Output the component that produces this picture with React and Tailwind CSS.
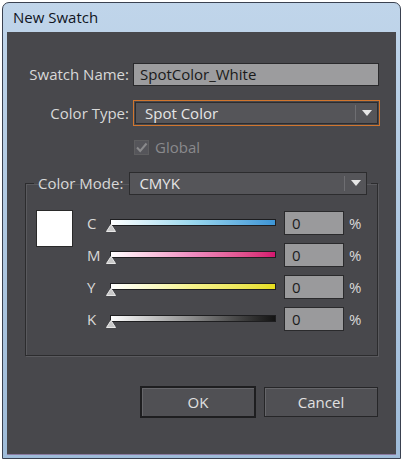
import React from 'react'

const font = { fontFamily: '"Open Sans", "Noto Sans", Arial, sans-serif' }

function Arrow() {
  return (
    <svg width="10" height="7" viewBox="0 0 10 7">
      <path d="M0 0 L10 0 L5 6 Z" fill="#e6e6e6" />
    </svg>
  )
}

function Thumb() {
  return (
    <svg width="10" height="8" viewBox="0 0 10 8">
      <path d="M5 0.5 L9.5 7.5 L0.5 7.5 Z" fill="#c8c8c8" stroke="#e8e8e8" strokeWidth="1" />
    </svg>
  )
}

const sliders = [
  { k: 'C', track: 'bg-gradient-to-r from-white via-[#9ad8ee] to-[#3d95d6]' },
  { k: 'M', track: 'bg-gradient-to-r from-white via-[#ee8cc0] to-[#d4146f]' },
  { k: 'Y', track: 'bg-gradient-to-r from-white via-[#f6f28a] to-[#e6de1a]' },
  { k: 'K', track: 'bg-gradient-to-r from-white via-[#8a8a8a] to-[#141414]' },
]

export default function App() {
  return (
    <div className="w-[404px] h-[461px] bg-white pt-[2px] pl-[2px] pr-[3px] pb-[2px]" style={font}>
      <div className="h-full flex flex-col rounded-t-[7px] border border-[#3a4150] bg-gradient-to-b from-[#c0d5ea] to-[#9fbcd9] px-[4px] pb-[3px]">
        <div className="h-[29px] flex items-center pl-[6px] text-[15px] text-[#10141e]">New Swatch</div>
        <div className="flex-1 bg-[#48484c] border-b border-[#8a7aa0] text-[15px] text-[#d8d8d8]">
          <div className="flex items-center mt-[31px]">
            <div className="w-[122px] text-right">Swatch Name:</div>
            <div className="ml-[4px] w-[246px] h-[23px] bg-[#9c9c9e] border border-[#2a2a2c] flex items-center pl-[6px] text-[#1a1a1a]">
              SpotColor_White
            </div>
          </div>

          <div className="flex items-center mt-[14px]">
            <div className="w-[122px] text-right">Color Type:</div>
            <div className="ml-[4px] w-[247px] h-[26px] border border-[#d2762e] p-[1px]">
              <div className="h-full bg-[#555559] border border-[#2c2c2e] flex items-center">
                <div className="flex-1 pl-[9px] text-[#e6e6e6]">Spot Color</div>
                <div className="w-[1px] h-[16px] bg-[#6e6e72]" />
                <div className="w-[21px] flex justify-center"><Arrow /></div>
              </div>
            </div>
          </div>

          <div className="flex items-center mt-[13px] ml-[127px] h-[17px] text-[#8a8a8c]">
            <div className="w-[15px] h-[15px] border border-[#5e5e60] bg-[#55555a] flex items-center justify-center">
              <svg width="13" height="13" viewBox="0 0 13 13">
                <path d="M2 6.5 L5.2 10 L11.5 2.5" fill="none" stroke="#8a8a8c" strokeWidth="2" />
              </svg>
            </div>
            <div className="ml-[6px]">Global</div>
          </div>

          <fieldset className="mt-[16px] ml-[18px] w-[353px] h-[184px] border border-[#2c2c2e] shadow-[1px_1px_0_#5a5a5e,inset_1px_1px_0_#5a5a5e]">
            <legend className="ml-[8px] px-[4px] whitespace-nowrap">
              <div className="flex items-center">
                <span>Color Mode:</span>
                <div className="ml-[6px] w-[238px] h-[23px] bg-[#555559] border border-[#2c2c2e] flex items-center">
                  <div className="flex-1 pl-[9px] text-[#e6e6e6]">CMYK</div>
                  <div className="w-[1px] h-[15px] bg-[#6e6e72]" />
                  <div className="w-[21px] flex justify-center"><Arrow /></div>
                </div>
              </div>
            </legend>
            <div className="flex mt-[12px] pl-[10px]">
              <div className="mt-[3px] w-[37px] h-[37px] bg-white border border-[#2a2a2a]" />
              <div className="ml-[14px] flex flex-col">
                {sliders.map((s) => (
                  <div key={s.k} className="h-[32px] flex items-center">
                    <div className="w-[23px] text-[15px]">{s.k}</div>
                    <div className="relative w-[166px] h-[7px] mt-[-2px]">
                      <div className={`h-full border border-[#1e1e20] ${s.track}`} />
                      <div className="absolute left-[-4px] top-[5px]"><Thumb /></div>
                    </div>
                    <div className="ml-[8px] w-[60px] h-[24px] bg-[#9a9a9c] border border-[#2a2a2c] flex items-center pl-[7px] text-[#1c1c1c]">0</div>
                    <div className="ml-[5px]">%</div>
                  </div>
                ))}
              </div>
            </div>
          </fieldset>

          <div className="flex mt-[30px] ml-[133px]">
            <div className="w-[116px] h-[32px] border-2 border-[#1e1e20] bg-[#505054] flex items-center justify-center text-[#e0e0e0] shadow-[inset_1px_1px_0_#66666a]">OK</div>
            <div className="ml-[8px] w-[114px] h-[30px] mt-[1px] border border-[#262628] bg-[#505054] flex items-center justify-center text-[#e0e0e0] shadow-[inset_1px_1px_0_#66666a]">Cancel</div>
          </div>
        </div>
      </div>
    </div>
  )
}
